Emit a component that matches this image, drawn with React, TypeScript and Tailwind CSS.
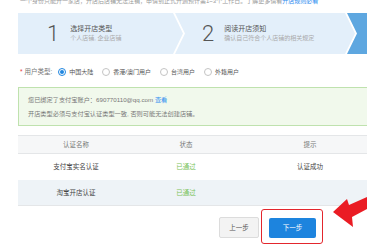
import React from 'react';

const font = "font-['Liberation_Sans','Noto_Sans_CJK_SC',sans-serif]";

const Radio = ({ checked, label }: { checked?: boolean; label: string }) => (
  <div className="flex items-center">
    <span
      className={`flex h-[8px] w-[8px] items-center justify-center rounded-full border bg-white ${
        checked ? 'border-[#1f86e0]' : 'border-[#c4c4c4]'
      }`}
    >
      {checked && <span className="h-[4px] w-[4px] rounded-full bg-[#1f86e0]" />}
    </span>
    <span className="ml-[3px] text-[6px] text-[#555]">{label}</span>
  </div>
);

const App: React.FC = () => {
  return (
    <div className={`relative h-[248px] w-[367px] overflow-hidden bg-white ${font}`}>
      <div className="flex w-[400px] flex-col pl-[18px]">
        {/* Notice line, clipped at the top */}
        <div className="-mt-[3px] h-[9px] whitespace-nowrap pl-[2px] text-[6px] leading-[9px] text-[#999]">
          一个身份只能开一家店，开店后店铺无法注销，申请到正式开通预计需1~3个工作日。了解更多请看
          <span className="text-[#2d8cf0]">开店规则必看</span>
        </div>

        {/* Steps banner */}
        <div className="mt-[7px] flex h-[41px]">
          <div className="flex w-[165px] shrink-0 items-center bg-[#e3effa] pl-[29px] [clip-path:polygon(0_0,calc(100%_-_10px)_0,100%_50%,calc(100%_-_10px)_100%,0_100%)]">
            <span className="font-['Roboto'] text-[22px] font-light leading-none text-[#555]">1</span>
            <div className="ml-[11px] flex flex-col">
              <span className="text-[7px] leading-[10px] text-[#555]">选择开店类型</span>
              <span className="text-[6px] leading-[9px] text-[#aaa]">个人店铺, 企业店铺</span>
            </div>
          </div>
          <div className="-ml-[8px] flex w-[180px] shrink-0 items-center bg-[#e3effa] pl-[27px] [clip-path:polygon(0_0,calc(100%_-_10px)_0,100%_50%,calc(100%_-_10px)_100%,0_100%,10px_50%)]">
            <span className="font-['Roboto'] text-[22px] font-light leading-none text-[#555]">2</span>
            <div className="ml-[10px] flex flex-col">
              <span className="text-[7px] leading-[10px] text-[#555]">阅读开店须知</span>
              <span className="text-[6px] leading-[9px] text-[#aaa]">确认自己符合个人店铺的相关规定</span>
            </div>
          </div>
          <div className="-ml-[8px] flex-1 bg-[#5ea7e0] [clip-path:polygon(0_0,100%_0,100%_100%,0_100%,10px_50%)]" />
        </div>

        {/* User type */}
        <div className="mt-[12px] flex h-[12px] items-center pl-[2px]">
          <span className="text-[6.5px] text-[#e4393c]">*</span>
          <span className="ml-[2px] text-[6.5px] text-[#777]">用户类型:</span>
          <div className="ml-[6px] flex items-center gap-[9px]">
            <Radio checked label="中国大陆" />
            <Radio label="香港/澳门用户" />
            <Radio label="台湾用户" />
            <Radio label="外籍用户" />
          </div>
        </div>

        {/* Alipay notice */}
        <div className="mt-[9px] flex h-[39px] flex-col justify-center gap-[5px] border border-[#bfe2ae] bg-[#f1f9ec] pl-[9px] text-[6.2px] leading-[9px] text-[#777]">
          <div>
            您已绑定了支付宝账户：690770110@qq.com <span className="text-[#2d8cf0]">查看</span>
          </div>
          <div>开店类型必须与支付宝认证类型一致, 否则可能无法创建店铺。</div>
        </div>

        {/* Certification table */}
        <div className="mt-[9px] flex flex-col text-[6.5px]">
          <div className="flex h-[19px] items-center border-y border-[#e4e6e8] bg-[#f6f7f8] text-[#777]">
            <div className="w-[116px] text-center">认证名称</div>
            <div className="w-[104px] text-center">状态</div>
            <div className="w-[144px] text-center">提示</div>
          </div>
          <div className="flex h-[26px] items-center text-[#444]">
            <div className="w-[116px] text-center">支付宝实名认证</div>
            <div className="w-[104px] text-center text-[#7bc35a]">已通过</div>
            <div className="w-[144px] text-center">认证成功</div>
          </div>
          <div className="flex h-[26px] items-center border-b border-[#e4e6e8] bg-[#eef3f7] text-[#444]">
            <div className="w-[116px] text-center">淘宝开店认证</div>
            <div className="w-[104px] text-center text-[#7bc35a]">已通过</div>
            <div className="w-[144px] text-center" />
          </div>
        </div>

        {/* Actions */}
        <div className="ml-[201px] mt-[11px] flex items-center">
          <button className="flex h-[21px] w-[40px] items-center justify-center rounded-[2px] border border-[#dcdcdc] bg-[#f3f3f3] text-[6.5px] text-[#555]">
            上一步
          </button>
          <div className="relative ml-[10px]">
            <button className="flex h-[20px] w-[47px] items-center justify-center rounded-[2px] bg-[#1d84de] text-[6.5px] text-white">
              下一步
            </button>
            <div className="absolute -left-[8px] -right-[7px] -top-[9px] -bottom-[6px] rounded-[3px] border-[1.5px] border-[#e3262d]" />
          </div>
        </div>
      </div>

      {/* Annotation arrow */}
      <svg className="absolute left-[328px] top-[190px]" width="39" height="40" viewBox="0 0 39 40">
        <polygon points="5,22 19,9 21,15 39,7 39,19 24,27 25,37" fill="#ea1c24" />
      </svg>
    </div>
  );
};

export default App;
